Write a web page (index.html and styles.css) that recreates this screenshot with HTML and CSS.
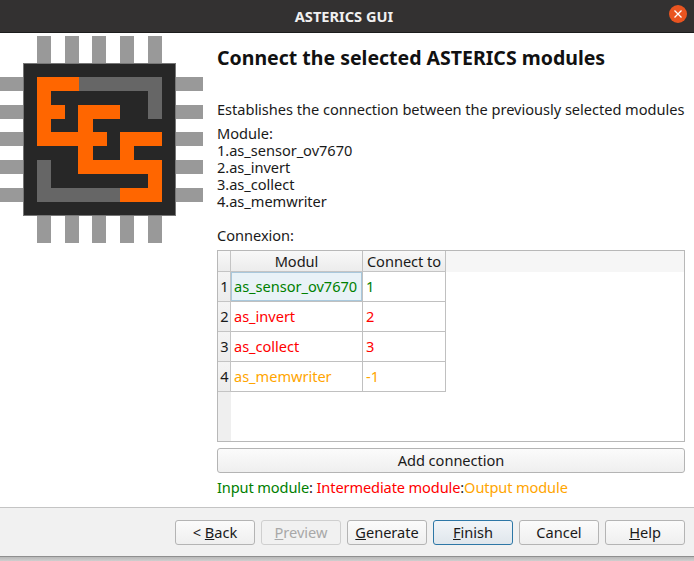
FILE: index.html
```html
<!DOCTYPE html>
<html lang="en">
<head>
<meta charset="utf-8">
<title>ASTERICS GUI</title>
<link rel="stylesheet" href="styles.css">
</head>
<body>
<div class="window">
  <header class="titlebar">
    <span class="title">ASTERICS GUI</span>
    <span class="close"><svg width="18" height="18" viewBox="0 0 18 18"><circle cx="9" cy="9" r="9" fill="#e95420"/><path d="M5.5 5.5l7 7M12.500 5.500l-7 7" stroke="#fff" stroke-width="1.300"/></svg></span>
  </header>
  <main class="main">
    <aside class="logo">
      <svg width="203" height="208" viewBox="0 0 203 208">
        <g fill="#999">
          <rect x="37" y="0" width="14" height="28"/><rect x="65" y="0" width="14" height="28"/><rect x="92" y="0" width="14" height="28"/><rect x="120" y="0" width="14" height="28"/><rect x="148" y="0" width="14" height="28"/>
          <rect x="37" y="180" width="14" height="27"/><rect x="65" y="180" width="14" height="27"/><rect x="92" y="180" width="14" height="27"/><rect x="120" y="180" width="14" height="27"/><rect x="148" y="180" width="14" height="27"/>
          <rect x="0" y="41" width="24" height="14"/><rect x="0" y="69" width="24" height="14"/><rect x="0" y="96" width="24" height="14"/><rect x="0" y="124" width="24" height="14"/><rect x="0" y="152" width="24" height="14"/>
          <rect x="175" y="41" width="28" height="14"/><rect x="175" y="69" width="28" height="14"/><rect x="175" y="96" width="28" height="14"/><rect x="175" y="124" width="28" height="14"/><rect x="175" y="152" width="28" height="14"/>
        </g>
        <rect x="23.500" y="27.500" width="152" height="152" fill="#272727" stroke="#777"/>
        <path fill="#666" d="M79 41H162V83H148V55H79ZM37 124H51V152H120V166H37Z"/>
        <path fill="#ff6600" d="M37 41H79V55H51V69H65V83H51V96H78V69H120V83H93V96H107V110H93V124H120V96H162V110H134V124H162V166H120V152H148V138H78V110H37Z"/>
      </svg>
    </aside>
    <section class="content">
      <h1 class="heading">Connect the selected ASTERICS modules</h1>
      <p class="intro">Establishes the connection between the previously selected modules</p>
      <div class="modules">
        <div>Module:</div>
        <div>1.as_sensor_ov7670</div>
        <div>2.as_invert</div>
        <div>3.as_collect</div>
        <div>4.as_memwriter</div>
      </div>
      <div class="connexion">Connexion:</div>
      <div class="table">
        <div class="row head">
          <div class="corner"></div>
          <div class="hcell c1">Modul</div>
          <div class="hcell c2">Connect to</div>
          <div class="hfill"></div>
        </div>
        <div class="row">
          <div class="rownum">1</div>
          <div class="cell c1 selected green">as_sensor_ov7670</div>
          <div class="cell c2 green">1</div>
        </div>
        <div class="row">
          <div class="rownum">2</div>
          <div class="cell c1 red">as_invert</div>
          <div class="cell c2 red">2</div>
        </div>
        <div class="row">
          <div class="rownum">3</div>
          <div class="cell c1 red">as_collect</div>
          <div class="cell c2 red">3</div>
        </div>
        <div class="row">
          <div class="rownum">4</div>
          <div class="cell c1 orange">as_memwriter</div>
          <div class="cell c2 orange">-1</div>
        </div>
        <div class="rest"><div class="corner"></div></div>
      </div>
      <button class="btn add">Add connection</button>
      <p class="legend"><span class="green">Input module</span>: <span class="red">Intermediate module</span>:<span class="orange">Output module</span></p>
    </section>
  </main>
  <footer class="footer">
    <button class="btn">&lt; <u>B</u>ack</button>
    <button class="btn disabled"><u>P</u>review</button>
    <button class="btn"><u>G</u>enerate</button>
    <button class="btn primary"><u>F</u>inish</button>
    <button class="btn">Cancel</button>
    <button class="btn"><u>H</u>elp</button>
  </footer>
  <div class="shadow"></div>
</div>
</body>
</html>
```
FILE: styles.css
```css
* { box-sizing: border-box; }
html, body { margin: 0; padding: 0; height: 100%; }
body {
  width: 694px;
  height: 561px;
  overflow: hidden;
  font-family: "Noto Sans", "Open Sans", sans-serif;
  font-size: 14.6px;
  letter-spacing: -0.03px;
  color: #1a1a1a;
  background: #fff;
}
.window { display: flex; flex-direction: column; height: 561px; }
.titlebar {
  height: 33px;
  flex: none;
  padding-right: 6px;
  background: #333131;
  border-bottom: 1px solid #1c1c1c;
  display: flex;
  align-items: center;
  justify-content: center;
  position: relative;
}
.title { color: #f0f0f0; font-weight: 700; font-size: 14.6px; letter-spacing: 0; }
.close { position: absolute; right: 7px; top: 5px; width: 18px; height: 18px; display: block; }
.close svg { display: block; }
.main { flex: 1; display: flex; background: #fff; min-height: 0; }
.logo { width: 217px; flex: none; padding-top: 3px; }
.logo svg { display: block; }
.content { flex: 1; padding-right: 9px; display: flex; flex-direction: column; }
.heading { margin: 13px 0 0; font-size: 19.5px; line-height: 24px; font-weight: 700; letter-spacing: 0; color: #111; }
.intro { margin: 31px 0 0; line-height: 17px; }
.modules { margin-top: 7px; line-height: 17px; }
.connexion { margin-top: 17px; line-height: 17px; }
.table {
  margin-top: 6px;
  height: 192px;
  border: 1px solid #b8b8b8;
  display: flex;
  flex-direction: column;
  background: #fff;
}
.row { display: flex; height: 30px; flex: none; }
.head { height: 21px; background: #f6f6f6; }
.corner { width: 13px; flex: none; background: #efefef; }
.head .corner { border-right: 1px solid #c4c4c4; border-bottom: 1px solid #c4c4c4; background: linear-gradient(#f8f8f8, #ececec); }
.hcell {
  height: 21px;
  background: linear-gradient(#f8f8f8, #ececec);
  border-right: 1px solid #c0c0c0;
  border-bottom: 1px solid #c4c4c4;
  text-align: center;
  line-height: 20px;
  color: #1a1a1a;
  white-space: nowrap;
}
.hfill { flex: 1; }
.c1 { width: 132px; flex: none; }
.c2 { width: 83px; flex: none; }
.rownum {
  width: 13px;
  flex: none;
  background: linear-gradient(#f4f4f4, #ececec);
  border-right: 1px solid #c4c4c4;
  border-bottom: 1px solid #c4c4c4;
  text-align: center;
  line-height: 29px;
  color: #1a1a1a;
  letter-spacing: 0;
  padding-left: 1px;
}
.cell {
  border-right: 1px solid #c0c0c0;
  border-bottom: 1px solid #c0c0c0;
  padding-left: 3px;
  line-height: 29px;
  white-space: nowrap;
}
.selected { background: #e9f2f7; box-shadow: inset 0 0 0 1px #a9c8dc; }
.rest { flex: 1; display: flex; }
.rest .corner { background: #efefef; }
.green { color: #008000; }
.red { color: #ff0000; }
.orange { color: #ffa500; }
.btn {
  font: inherit;
  letter-spacing: inherit;
  color: #1a1a1a;
  height: 25px;
  border: 1px solid #b4b4b4;
  border-radius: 3px;
  background: linear-gradient(#fbfbfb, #efefef);
  padding: 0 0 2px;
  text-align: center;
}
.add { margin-top: 6px; width: 468px; flex: none; }
.legend { margin: 6px 0 0; line-height: 17px; color: #1a1a1a; letter-spacing: -0.12px; }
.footer {
  height: 49px;
  flex: none;
  background: #f1f1f1;
  border-top: 1px solid #c4c4c4;
  padding: 12px 9px 0 0;
  display: flex;
  justify-content: flex-end;
  gap: 6px;
}
.footer .btn { width: 80px; }
.footer .disabled { color: #a8a8a8; border-color: #cfcfcf; background: #f1f1f1; }
.footer .primary { border-color: #2d77a6; background: linear-gradient(#f2f5f8, #dfe6ec); }
.shadow { height: 5px; flex: none; border-top: 1px solid #8f8f8f; background: linear-gradient(#b8b8b8, #cfcfcf); }
```
